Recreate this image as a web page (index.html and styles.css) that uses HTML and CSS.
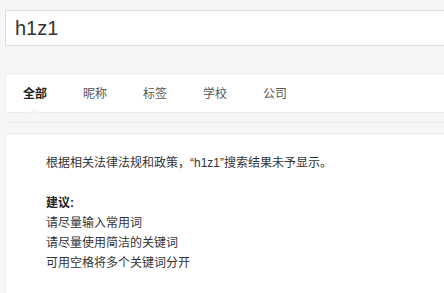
FILE: index.html
```html
<!DOCTYPE html>
<html lang="zh">
<head>
<meta charset="utf-8">
<link rel="stylesheet" href="styles.css">
</head>
<body>
<div class="page">
  <div class="search">h1z1</div>
  <div class="tabs">
    <span class="tab active">全部</span>
    <span class="tab">昵称</span>
    <span class="tab">标签</span>
    <span class="tab">学校</span>
    <span class="tab">公司</span>
  </div>
  <div class="divider"></div>
  <div class="result">
    <p>根据相关法律法规和政策，“h1z1”搜索结果未予显示。</p>
    <p><b>建议:</b><br>请尽量输入常用词<br>请尽量使用简洁的关键词<br>可用空格将多个关键词分开</p>
  </div>
</div>
</body>
</html>
```
FILE: styles.css
```css
html, body {
  margin: 0;
  padding: 0;
  background: #f6f6f6;
  overflow: hidden;
}
.page {
  padding: 10px 0 0 5px;
  width: 460px;
  height: 293px;
  box-sizing: border-box;
  display: flex;
  flex-direction: column;
  overflow: hidden;
  font-family: "Noto Sans CJK SC", "Liberation Sans", sans-serif;
}
.search {
  height: 36px;
  flex: none;
  box-sizing: border-box;
  border: 1px solid #dedede;
  background: #fff;
  padding: 0 9px;
  font-family: "Liberation Sans", "Noto Sans CJK SC", sans-serif;
  font-size: 20px;
  line-height: 34px;
  color: #333;
}
.tabs {
  margin-top: 27px;
  height: 40px;
  flex: none;
  box-sizing: border-box;
  border: 1px solid #ececec;
  background: #fff;
  display: flex;
  align-items: center;
  padding-left: 17px;
  position: relative;
}
.tab {
  font-size: 12px;
  color: #555;
  width: 60px;
  line-height: 20px;
}
.tab.active {
  color: #222;
  font-weight: bold;
  position: relative;
}
.tab.active::after {
  content: "";
  position: absolute;
  left: 5px;
  bottom: -11px;
  width: 0;
  height: 0;
  border-left: 6px solid transparent;
  border-right: 6px solid transparent;
  border-bottom: 6px solid #f3f3f3;
}
.divider {
  margin-top: 9px;
  height: 1px;
  flex: none;
  background: #ececec;
}
.result {
  margin-top: 10px;
  flex: 1;
  border: 1px solid #ececec;
  border-bottom: none;
  background: #fff;
  padding: 19px 0 0 40px;
  font-family: "Liberation Sans", "Noto Sans CJK SC", sans-serif;
  font-size: 12px;
  line-height: 20px;
  color: #333;
}
.result p {
  margin: 0 0 20px 0;
}
.result b {
  color: #222;
}
```
